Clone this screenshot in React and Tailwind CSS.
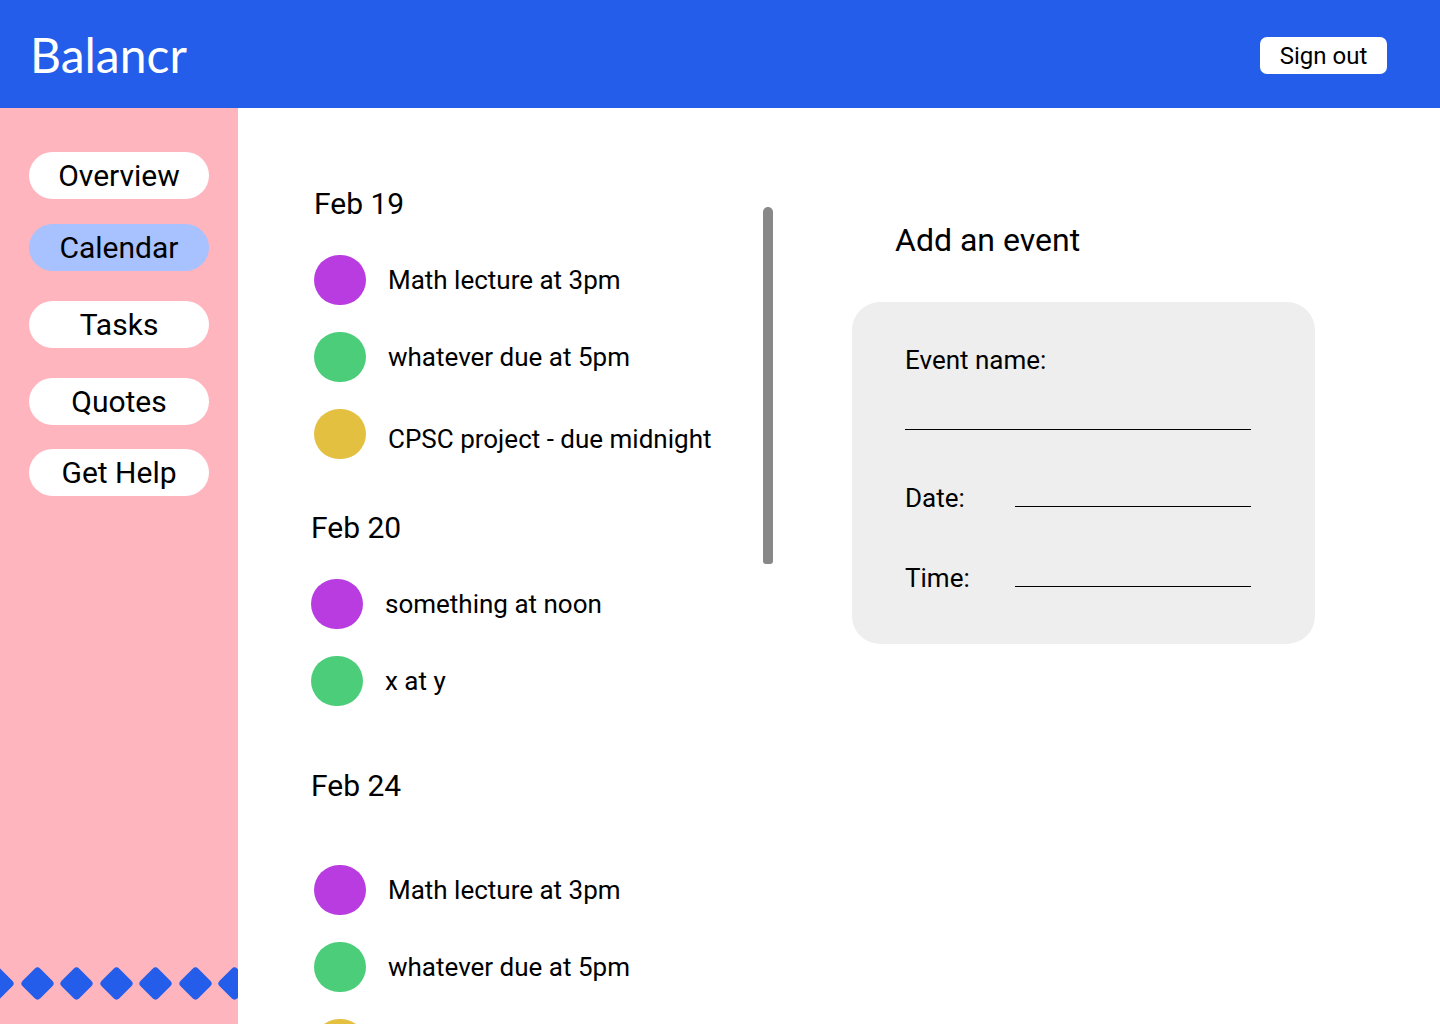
const days = [
  {
    label: "Feb 19",
    labelShift: "ml-[3px]",
    itemShift: "ml-[3px]",
    top: "mt-[76px]",
    gap: "mt-[31px]",
    items: [
      { color: "bg-[#b83ce0]", text: "Math lecture at 3pm" },
      { color: "bg-[#4ccd7a]", text: "whatever due at 5pm" },
      { color: "bg-[#e3c03f]", text: "CPSC project - due midnight" },
    ],
  },
  {
    label: "Feb 20",
    labelShift: "ml-0",
    itemShift: "ml-0",
    top: "mt-[49px]",
    gap: "mt-[31px]",
    items: [
      { color: "bg-[#b83ce0]", text: "something at noon" },
      { color: "bg-[#4ccd7a]", text: "x at y" },
    ],
  },
  {
    label: "Feb 24",
    labelShift: "ml-0",
    itemShift: "ml-[3px]",
    top: "mt-[60px]",
    gap: "mt-[59px]",
    items: [
      { color: "bg-[#b83ce0]", text: "Math lecture at 3pm" },
      { color: "bg-[#4ccd7a]", text: "whatever due at 5pm" },
      { color: "bg-[#e3c03f]", text: "CPSC project - due midnight" },
    ],
  },
]

const nav = [
  { label: "Overview", active: false, mt: "mt-[44px]" },
  { label: "Calendar", active: true, mt: "mt-[25px]" },
  { label: "Tasks", active: false, mt: "mt-[30px]" },
  { label: "Quotes", active: false, mt: "mt-[30px]" },
  { label: "Get Help", active: false, mt: "mt-[24px]" },
]

export default function App() {
  return (
    <div className="w-[1440px] h-[1024px] overflow-hidden flex flex-col bg-white text-black font-['Roboto',sans-serif]">
      {/* Header */}
      <header className="h-[108px] shrink-0 bg-[#235dea] flex items-center justify-between pl-[30px] pr-[53px]">
        <h1 className="text-white text-[48px] leading-none font-['Lato','Noto_Sans',sans-serif] font-normal mt-[2px]">
          Balancr
        </h1>
        <button className="bg-white rounded-[7px] w-[127px] h-[37px] text-[24px] leading-none mt-[3px]">
          Sign out
        </button>
      </header>

      <div className="flex flex-1 min-h-0">
        {/* Sidebar */}
        <aside className="w-[238px] shrink-0 bg-[#ffb5be] flex flex-col justify-between overflow-hidden">
          <nav className="flex flex-col">
            {nav.map((n) => (
              <button
                key={n.label}
                className={`${n.mt} ml-[29px] w-[180px] h-[47px] rounded-full text-[30px] leading-none ${
                  n.active ? "bg-[#a8c1ff]" : "bg-white"
                }`}
              >
                {n.label}
              </button>
            ))}
          </nav>
          <div className="flex gap-[14.5px] -ml-[15px] mb-[28px]">
            {Array.from({ length: 7 }).map((_, i) => (
              <div key={i} className="w-[25px] h-[25px] shrink-0 rotate-45 rounded-[4px] bg-[#235dea]" />
            ))}
          </div>
        </aside>

        {/* Main */}
        <main className="flex flex-1">
          <div className="w-[452px] ml-[73px] flex flex-col">
            {days.map((d) => (
              <div key={d.label} className={`${d.top} flex flex-col`}>
                <div className={`${d.labelShift} h-[40px] flex items-center text-[30px] leading-none`}>{d.label}</div>
                <div className={`${d.itemShift} ${d.gap} flex flex-col gap-[27px]`}>
                  {d.items.map((it, i) => (
                    <div key={i} className="flex items-center h-[50px]">
                      <div className={`w-[52px] h-[50px] rounded-full shrink-0 ${it.color}`} />
                      <span className={`ml-[22px] text-[26px] leading-none whitespace-nowrap ${i === 2 ? "mt-[10px]" : ""}`}>
                        {it.text}
                      </span>
                    </div>
                  ))}
                </div>
              </div>
            ))}
          </div>

          {/* Scrollbar */}
          <div className="w-[10px] h-[357px] mt-[99px] shrink-0 rounded-t-[5px] rounded-b-[3px] bg-[#888888]" />

          {/* Add event panel */}
          <section className="ml-[79px] flex flex-col">
            <h2 className="mt-[112px] ml-[43px] h-[40px] flex items-center text-[32px] leading-none">Add an event</h2>
            <div className="mt-[42px] w-[463px] h-[342px] rounded-[28px] bg-[#eeeeee] flex flex-col pl-[53px]">
              <div className="mt-[43px] h-[30px] flex items-center text-[26px] leading-none">Event name:</div>
              <div className="mt-[54px] w-[346px] h-px bg-black" />
              <div className="mt-[53px] h-[30px] w-[346px] flex items-center">
                <span className="w-[110px] text-[26px] leading-none">Date:</span>
                <div className="flex-1 h-px bg-black mt-[16px]" />
              </div>
              <div className="mt-[50px] h-[30px] w-[346px] flex items-center">
                <span className="w-[110px] text-[26px] leading-none">Time:</span>
                <div className="flex-1 h-px bg-black mt-[16px]" />
              </div>
            </div>
          </section>
        </main>
      </div>
    </div>
  )
}
